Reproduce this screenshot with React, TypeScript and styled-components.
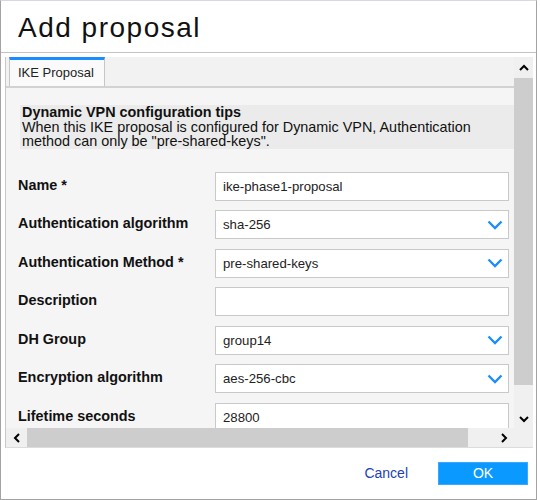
import React from 'react';
import styled, { createGlobalStyle } from 'styled-components';

const Global = createGlobalStyle`
  html, body { margin: 0; padding: 0; background: #fff; }
  body { font-family: "Liberation Sans", Arial, sans-serif; color: #111; }
  * { box-sizing: border-box; }
`;

const Dialog = styled.div`
  width: 537px;
  height: 500px;
  border: 1px solid #a3a3a3;
  border-top-color: #d6dae0;
  display: flex;
  flex-direction: column;
  background: #fff;
`;

const Header = styled.header`
  height: 52px;
  flex: none;
  border-bottom: 1px solid #c3c3c3;
  padding: 11px 0 0 17px;
`;

const Title = styled.h1`
  margin: 0;
  font-size: 28px;
  line-height: 32px;
  font-weight: 400;
  letter-spacing: 1.5px;
  color: #111;
`;

const Frame = styled.div`
  flex: none;
  margin: 4px 3px 0 4px;
  height: 391px;
  border-left: 1px solid #c8c8c8;
  border-bottom: 1px solid #dcdcdc;
  display: grid;
  grid-template-columns: 508px 19px;
  grid-template-rows: 371px 19px;
`;

const Viewport = styled.div`
  overflow: hidden;
  background: #f5f5f5;
`;

const Content = styled.div`
  width: 538px;
`;

const TabStrip = styled.div`
  height: 31px;
  display: flex;
  padding-left: 3px;
  background: #f2f2f2;
  border-bottom: 2px solid #d2d2d2;
`;

const Tab = styled.div<{ $active?: boolean }>`
  height: 29px;
  border-top: 3px solid ${(p) => (p.$active ? '#1a8cff' : 'transparent')};
  border-left: 1px solid #c6c6c6;
  border-right: 1px solid #c6c6c6;
  background: #fafafa;
  padding: 5px 10px 0 8px;
  font-size: 13px;
  line-height: 15px;
  color: #222;
`;

const Tips = styled.div`
  margin: 17px 0 0 14px;
  background: #ebebeb;
  padding: 0 2px;
  font-size: 14.4px;
  line-height: 14.6px;
  color: #111;
`;

const TipsTitle = styled.div`
  font-weight: 700;
`;

const Form = styled.div`
  display: grid;
  grid-template-columns: 197px 294px;
  row-gap: 9.5px;
  margin-top: 23px;
  padding: 0 0 30px 12px;
`;

const Label = styled.div`
  font-weight: 700;
  font-size: 14.4px;
  line-height: 16px;
  padding-top: 5px;
  color: #111;
`;

const Field = styled.div`
  height: 29px;
  border: 1px solid #c9c9c9;
  background: #fff;
  display: flex;
  align-items: center;
  justify-content: space-between;
  padding: 0 5px 0 7px;
  font-size: 13.2px;
  color: #222;
`;

const VScroll = styled.div`
  background: #f0f0f0;
  display: flex;
  flex-direction: column;
`;

const HScroll = styled.div`
  background: #f0f0f0;
  display: flex;
`;

const Corner = styled.div`
  background: #f0f0f0;
`;

const ArrowCell = styled.div<{ $w: number; $h: number; $pt?: number }>`
  flex: none;
  width: ${(p) => p.$w}px;
  height: ${(p) => p.$h}px;
  display: flex;
  align-items: center;
  justify-content: center;
  padding-top: ${(p) => p.$pt ?? 0}px;
`;

const VThumb = styled.div`
  flex: none;
  margin-top: 1px;
  height: 307px;
  background: #cdcdcd;
`;

const HThumb = styled.div`
  flex: none;
  width: 441px;
  background: #cdcdcd;
`;

const Spacer = styled.div`
  flex: 1;
`;

const Footer = styled.footer`
  flex: 1;
  display: flex;
  justify-content: flex-end;
  align-items: center;
  gap: 30px;
  padding: 0 8px 1px 0;
`;

const CancelLink = styled.span`
  font-size: 14px;
  color: #2340b8;
`;

const OkButton = styled.div`
  width: 90px;
  height: 23px;
  background: #0a9aff;
  border: 1px solid #3aa8ff;
  color: #fff;
  font-size: 14px;
  display: flex;
  align-items: center;
  justify-content: center;
`;

const Chevron = () => (
  <svg width="16" height="10" viewBox="0 0 16 10">
    <path d="M1.5 1.5 L8 8 L14.5 1.5" fill="none" stroke="#1a8cff" strokeWidth="2.3" />
  </svg>
);

const Arrow = ({ dir }: { dir: 'up' | 'down' | 'left' | 'right' }) => {
  const d = {
    up: 'M1 6 L5 2 L9 6',
    down: 'M1 2 L5 6 L9 2',
    left: 'M6 1 L2 5 L6 9',
    right: 'M2 1 L6 5 L2 9',
  }[dir];
  const horiz = dir === 'up' || dir === 'down';
  return (
    <svg width={horiz ? 10 : 8} height={horiz ? 8 : 10} viewBox={horiz ? '0 0 10 8' : '0 0 8 10'}>
      <path d={d} fill="none" stroke="#000" strokeWidth="2" />
    </svg>
  );
};

type Row = { label: string; value: string; select?: boolean };

const rows: Row[] = [
  { label: 'Name *', value: 'ike-phase1-proposal' },
  { label: 'Authentication algorithm', value: 'sha-256', select: true },
  { label: 'Authentication Method *', value: 'pre-shared-keys', select: true },
  { label: 'Description', value: '' },
  { label: 'DH Group', value: 'group14', select: true },
  { label: 'Encryption algorithm', value: 'aes-256-cbc', select: true },
  { label: 'Lifetime seconds', value: '28800' },
];

export default function App() {
  return (
    <>
      <Global />
      <Dialog>
        <Header>
          <Title>Add proposal</Title>
        </Header>
        <Frame>
          <Viewport>
            <Content>
              <TabStrip>
                <Tab $active>IKE Proposal</Tab>
              </TabStrip>
              <Tips>
                <TipsTitle>Dynamic VPN configuration tips</TipsTitle>
                When this IKE proposal is configured for Dynamic VPN, Authentication
                <br />
                method can only be "pre-shared-keys".
              </Tips>
              <Form>
                {rows.map((r) => (
                  <React.Fragment key={r.label}>
                    <Label>{r.label}</Label>
                    <Field>
                      <span>{r.value}</span>
                      {r.select && <Chevron />}
                    </Field>
                  </React.Fragment>
                ))}
              </Form>
            </Content>
          </Viewport>
          <VScroll>
            <ArrowCell $w={19} $h={20} $pt={2}>
              <Arrow dir="up" />
            </ArrowCell>
            <VThumb />
            <Spacer />
            <ArrowCell $w={19} $h={20} $pt={1}>
              <Arrow dir="down" />
            </ArrowCell>
          </VScroll>
          <HScroll>
            <ArrowCell $w={21} $h={19}>
              <Arrow dir="left" />
            </ArrowCell>
            <HThumb />
            <Spacer />
            <ArrowCell $w={20} $h={19}>
              <Arrow dir="right" />
            </ArrowCell>
          </HScroll>
          <Corner />
        </Frame>
        <Footer>
          <CancelLink>Cancel</CancelLink>
          <OkButton>OK</OkButton>
        </Footer>
      </Dialog>
    </>
  );
}
